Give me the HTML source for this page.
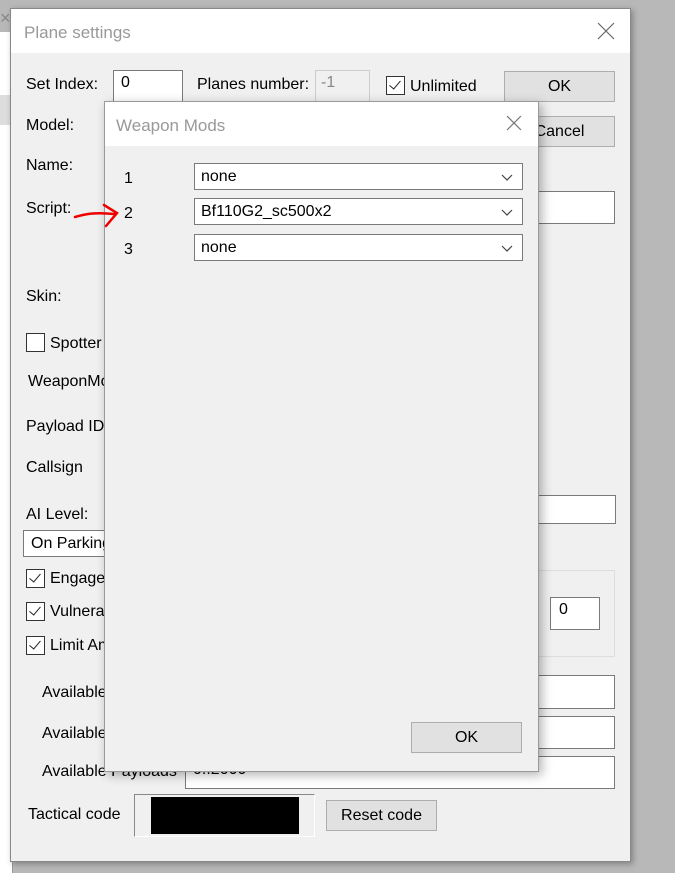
<!DOCTYPE html><html><head><style>
body{margin:0;width:675px;height:873px;background:#b8b8b8;position:relative;overflow:hidden;font-family:"Liberation Sans",sans-serif;font-size:16px;color:#000}
.a{position:absolute}
.in{position:absolute;background:#fff;border:1px solid #7a7a7a;box-sizing:border-box}
.btn{position:absolute;background:#e1e1e1;border:1px solid #adadad;box-sizing:border-box;text-align:center}
.cb{position:absolute;width:19px;height:19px;border:1px solid #333;background:#fff;box-sizing:border-box}
.cb.c::after{content:"";position:absolute;left:5px;top:1px;width:5px;height:10px;border:solid #222;border-width:0 1.5px 1.5px 0;transform:rotate(40deg)}
.l{position:absolute;line-height:18px;margin-top:1px}
</style></head><body>
<div class="a" style="left:0;top:32px;width:12px;height:841px;background:#fff;border-right:1px solid #999"></div>
<div class="a" style="left:0;top:95px;width:10px;height:30px;background:#ddd"></div>
<div class="a" style="left:0;top:8px;font-size:18px;color:#888">×</div>
<div class="a" style="left:10px;top:8px;width:621px;height:854px;background:#f0f0f0;border:1px solid #888;box-sizing:border-box;box-shadow:2px 2px 6px rgba(0,0,0,.3)"></div>
<div class="a" style="left:11px;top:9px;width:619px;height:44px;background:#fff"></div>
<div class="l" style="left:24px;top:23px;font-size:17px;color:#999">Plane settings</div>
<svg class="a" style="left:597px;top:22px" width="18" height="18"><path d="M1 1L17 17M17 1L1 17" stroke="#666" stroke-width="1.2"/></svg>
<div class="l" style="left:26px;top:75px">Set Index:</div>
<div class="in" style="left:113px;top:70px;width:70px;height:32px;padding:3px 7px">0</div>
<div class="l" style="left:197px;top:75px">Planes number:</div>
<div class="in" style="left:315px;top:70px;width:55px;height:32px;padding:3px 5px;background:#f0f0f0;border-color:#ccc;color:#888">-1</div>
<div class="cb c" style="left:386px;top:76px"></div>
<div class="l" style="left:410px;top:77px;font-size:16px">Unlimited</div>
<div class="btn" style="left:504px;top:71px;width:111px;height:31px;line-height:29px;font-size:16px">OK</div>
<div class="btn" style="left:504px;top:116px;width:111px;height:31px;line-height:29px;font-size:16px">Cancel</div>
<div class="l" style="left:26px;top:116px">Model:</div>
<div class="l" style="left:26px;top:156px">Name:</div>
<div class="l" style="left:26px;top:199px">Script:</div>
<div class="in" style="left:520px;top:191px;width:95px;height:33px"></div>
<div class="l" style="left:26px;top:287px">Skin:</div>
<div class="cb" style="left:26px;top:333px"></div>
<div class="l" style="left:50px;top:334px">Spotter</div>
<div class="l" style="left:28px;top:372px">WeaponMods</div>
<div class="l" style="left:26px;top:417px">Payload ID</div>
<div class="l" style="left:26px;top:458px">Callsign</div>
<div class="l" style="left:26px;top:505px">AI Level:</div>
<div class="in" style="left:520px;top:495px;width:96px;height:29px"></div>
<div class="in" style="left:23px;top:530px;width:100px;height:27px;padding:4px 7px;line-height:18px">On Parking</div>
<div class="cb c" style="left:26px;top:569px"></div><div class="l" style="left:50px;top:569px">Engage</div>
<div class="cb c" style="left:26px;top:602px"></div><div class="l" style="left:50px;top:602px">Vulnerable</div>
<div class="cb c" style="left:26px;top:636px"></div><div class="l" style="left:50px;top:636px">Limit Ammo</div>
<div class="a" style="left:520px;top:570px;width:95px;height:87px;border:1px solid #ddd;box-sizing:border-box"></div>
<div class="in" style="left:550px;top:597px;width:50px;height:33px;padding:3px 8px">0</div>
<div class="l" style="left:42px;top:683px">Available</div>
<div class="in" style="left:520px;top:675px;width:95px;height:34px"></div>
<div class="l" style="left:42px;top:724px">Available</div>
<div class="in" style="left:520px;top:716px;width:95px;height:33px"></div>
<div class="l" style="left:42px;top:762px">Available Payloads</div>
<div class="in" style="left:185px;top:756px;width:430px;height:33px;padding:4px 7px;line-height:18px">0..2000</div>
<div class="l" style="left:28px;top:805px">Tactical code</div>
<div class="a" style="left:134px;top:794px;width:181px;height:43px;border:1px solid;border-color:#888 #fff #fff #888;box-sizing:border-box;background:#f0f0f0"></div>
<div class="a" style="left:151px;top:797px;width:148px;height:37px;background:#000"></div>
<div class="btn" style="left:326px;top:800px;width:111px;height:31px;line-height:29px;font-size:16px">Reset code</div>
<div class="a" style="left:104px;top:101px;width:435px;height:671px;background:#f0f0f0;border:1px solid #999;box-sizing:border-box;box-shadow:3px 3px 10px rgba(0,0,0,.3)"></div>
<div class="a" style="left:105px;top:102px;width:433px;height:44px;background:#fff"></div>
<div class="l" style="left:116px;top:116px;font-size:17px;color:#999">Weapon Mods</div>
<svg class="a" style="left:506px;top:115px" width="16" height="16"><path d="M1 1L15 15M15 1L1 15" stroke="#777" stroke-width="1.2"/></svg>
<div class="l" style="left:124px;top:169px;font-size:16px">1</div>
<div class="l" style="left:124px;top:204px;font-size:16px">2</div>
<div class="l" style="left:124px;top:240px;font-size:16px">3</div>
<div class="in" style="left:194px;top:163px;width:329px;height:27px;padding:4px 6px;line-height:18px">none</div>
<div class="in" style="left:194px;top:198px;width:329px;height:27px;padding:4px 6px;line-height:18px">Bf110G2_sc500x2</div>
<div class="in" style="left:194px;top:234px;width:329px;height:27px;padding:4px 6px;line-height:18px">none</div>
<svg class="a" style="left:500px;top:172px" width="14" height="80"><g fill="none" stroke="#444" stroke-width="1.2"><path d="M2 3l5 5 5-5"/><path d="M2 38l5 5 5-5"/><path d="M2 74l5 5 5-5"/></g></svg>
<div class="btn" style="left:411px;top:722px;width:111px;height:31px;line-height:29px;font-size:16px">OK</div>
<svg class="a" style="left:70px;top:198px" width="55" height="35"><g fill="none" stroke="#e00" stroke-width="2.5" stroke-linecap="round"><path d="M5 19C15 16 25 14 44 16"/><path d="M34 7L47 15L36 28"/></g></svg>
</body></html>
